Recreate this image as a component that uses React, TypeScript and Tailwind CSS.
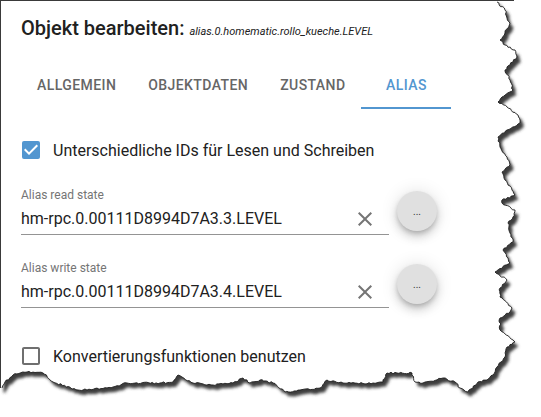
import React from "react";

const KEY: [number, number][] = [
  [497, 2], [505, 10], [507, 18], [510, 23], [505, 33], [500, 40], [505, 45], [515, 50], [517, 57], [510, 65],
  [505, 70], [510, 80], [513, 90], [502, 97], [498, 102], [507, 107], [518, 115], [520, 123], [507, 130], [498, 137],
  [500, 147], [507, 157], [510, 165], [502, 172], [505, 180], [512, 190], [515, 195], [502, 200], [502, 203], [515, 210],
  [513, 217], [508, 223], [510, 233], [513, 242], [503, 250], [508, 258], [510, 263], [495, 272], [507, 280], [500, 288],
  [500, 297], [512, 308], [510, 312], [500, 318], [500, 330], [513, 340], [515, 342], [507, 347], [505, 357], [497, 367],
  [493, 375], [487, 380], [478, 382], [468, 392], [460, 388], [455, 382], [443, 378], [423, 383], [415, 382], [412, 373],
  [397, 373], [387, 373], [383, 382], [373, 383], [343, 383], [327, 380], [320, 388], [300, 390], [285, 392], [273, 383],
  [260, 380], [250, 383], [243, 378], [233, 383], [213, 385], [193, 383], [182, 377], [178, 375], [173, 382], [160, 383],
  [127, 383], [113, 387], [83, 390], [78, 390], [53, 382], [43, 373], [27, 372], [13, 375], [5, 382], [2, 388],
];

function buildPoints(): [number, number][] {
  let s = 12345;
  const r = () => {
    s = (s * 16807) % 2147483647;
    return s / 2147483647;
  };
  const pts: [number, number][] = [KEY[0]];
  for (let k = 0; k < KEY.length - 1; k++) {
    const [ax, ay] = KEY[k];
    const [bx, by] = KEY[k + 1];
    const dx = bx - ax;
    const dy = by - ay;
    const L = Math.hypot(dx, dy);
    const n = Math.max(1, Math.round(L / 2));
    const px = -dy / (L || 1);
    const py = dx / (L || 1);
    for (let i = 1; i <= n; i++) {
      const t = i / n;
      const noise = i === n ? 0 : (r() - 0.5) * 1.8;
      pts.push([ax + dx * t + px * noise, ay + dy * t + py * noise]);
    }
  }
  return pts;
}

const PTS = buildPoints();
const EDGE = "M" + PTS.map(([x, y]) => `${x.toFixed(1)},${y.toFixed(1)}`).join(" L");
const POLY = "M0,0 L497,0 " + PTS.map(([x, y]) => `L${x.toFixed(1)},${y.toFixed(1)}`).join(" ") + " L0,388 Z";

function TornEdge() {
  return (
    <svg className="absolute left-0 top-0 pointer-events-none" width={541} height={417} viewBox="0 0 541 417">
      <defs>
        <mask id="outside">
          <rect width={541} height={417} fill="white" />
          <path d={POLY} fill="black" />
        </mask>
        <filter id="blur" x="-10%" y="-10%" width="120%" height="120%">
          <feGaussianBlur stdDeviation={1.6} />
        </filter>
      </defs>
      <g mask="url(#outside)">
        <rect width={541} height={417} fill="white" />
        <path d={POLY} fill="#3c3c3c" transform="translate(3.5,4.5)" filter="url(#blur)" />
      </g>
      <line x1={497} y1={0.5} x2={514} y2={0.5} stroke="#3a3a3a" strokeWidth={1} />
      <path d={EDGE} fill="none" stroke="#1e1e1e" strokeWidth={0.9} />
    </svg>
  );
}

function CheckedBox() {
  return (
    <svg width={24} height={24} viewBox="0 0 24 24" className="shrink-0 ml-[-2px] mt-[-1px]">
      <rect x={3} y={3} width={18} height={18} rx={2} fill="#5296d0" />
      <path d="M10 17l-5-5 1.41-1.41L10 14.17l7.59-7.59L19 8l-9 9z" fill="white" />
    </svg>
  );
}

function UncheckedBox() {
  return (
    <svg width={24} height={24} viewBox="0 0 24 24" className="shrink-0 ml-[-2px] mt-[-1px]">
      <path
        d="M19 5v14H5V5h14m0-2H5c-1.1 0-2 .9-2 2v14c0 1.1.9 2 2 2h14c1.1 0 2-.9 2-2V5c0-1.1-.9-2-2-2z"
        fill="#6f6f6f"
      />
    </svg>
  );
}

function ClearIcon() {
  return (
    <svg width={24} height={24} viewBox="0 0 24 24" className="shrink-0 mr-[12px]">
      <path
        d="M19 6.41L17.59 5 12 10.59 6.41 5 5 6.41 10.59 12 5 17.59 6.41 19 12 13.41 17.59 19 19 17.59 13.41 12z"
        fill="#757575"
      />
    </svg>
  );
}

function Field({ label, value, className }: { label: string; value: string; className?: string }) {
  return (
    <div className={"flex items-center " + (className ?? "")}>
      <div className="w-[368px] flex flex-col">
        <div className="text-[12px] leading-[16px] text-[#757575]">{label}</div>
        <div className="mt-[4px] flex items-center justify-between border-b border-[#949494] pb-[3px]">
          <span className="text-[16px] leading-[24px] text-[#212121]">{value}</span>
          <ClearIcon />
        </div>
      </div>
      <div className="ml-[8px] w-[40px] h-[40px] rounded-full bg-[#e0e0e0] flex items-center justify-center shadow-[0px_3px_5px_-1px_rgba(0,0,0,0.2),0px_6px_10px_0px_rgba(0,0,0,0.14),0px_1px_18px_0px_rgba(0,0,0,0.12)]">
        <span className="text-[10px] leading-[12px] text-[#333] mt-[1px]">...</span>
      </div>
    </div>
  );
}

export default function App() {
  const tabs = ["Allgemein", "Objektdaten", "Zustand", "Alias"];
  return (
    <div className="relative w-[541px] h-[417px] bg-white overflow-hidden font-['Roboto',sans-serif]">
      <div className="h-full border-l border-t border-[#3a3a3a] pl-[20px] pt-[13px]">
        <div className="h-[28px] leading-[28px] text-[20px] font-medium text-[#212121] whitespace-nowrap">
          Objekt bearbeiten: <span className="text-[11px] italic font-normal">alias.0.homematic.rollo_kueche.LEVEL</span>
        </div>

        <div className="mt-[19px] flex h-[48px]">
          {tabs.map((t, i) => {
            const active = i === 3;
            return (
              <div
                key={t}
                className={
                  "relative min-w-[90px] px-4 flex items-center justify-center uppercase text-[14px] leading-[24px] font-medium tracking-[0.03em] " +
                  (active ? "text-[#5296d0]" : "text-[#666666]")
                }
              >
                {t}
                {active && <div className="absolute left-0 right-0 bottom-0 h-[2px] bg-[#5296d0]" />}
              </div>
            );
          })}
        </div>

        <div className="mt-[30px] flex items-start">
          <CheckedBox />
          <span className="ml-[10px] text-[16px] leading-[24px] text-[#212121]">
            Unterschiedliche IDs für Lesen und Schreiben
          </span>
        </div>

        <Field className="mt-[24px]" label="Alias read state" value="hm-rpc.0.00111D8994D7A3.3.LEVEL" />
        <Field className="mt-[25px]" label="Alias write state" value="hm-rpc.0.00111D8994D7A3.4.LEVEL" />

        <div className="mt-[37px] flex items-start">
          <UncheckedBox />
          <span className="ml-[10px] text-[16px] leading-[24px] text-[#212121]">Konvertierungsfunktionen benutzen</span>
        </div>
      </div>
      <TornEdge />
    </div>
  );
}
